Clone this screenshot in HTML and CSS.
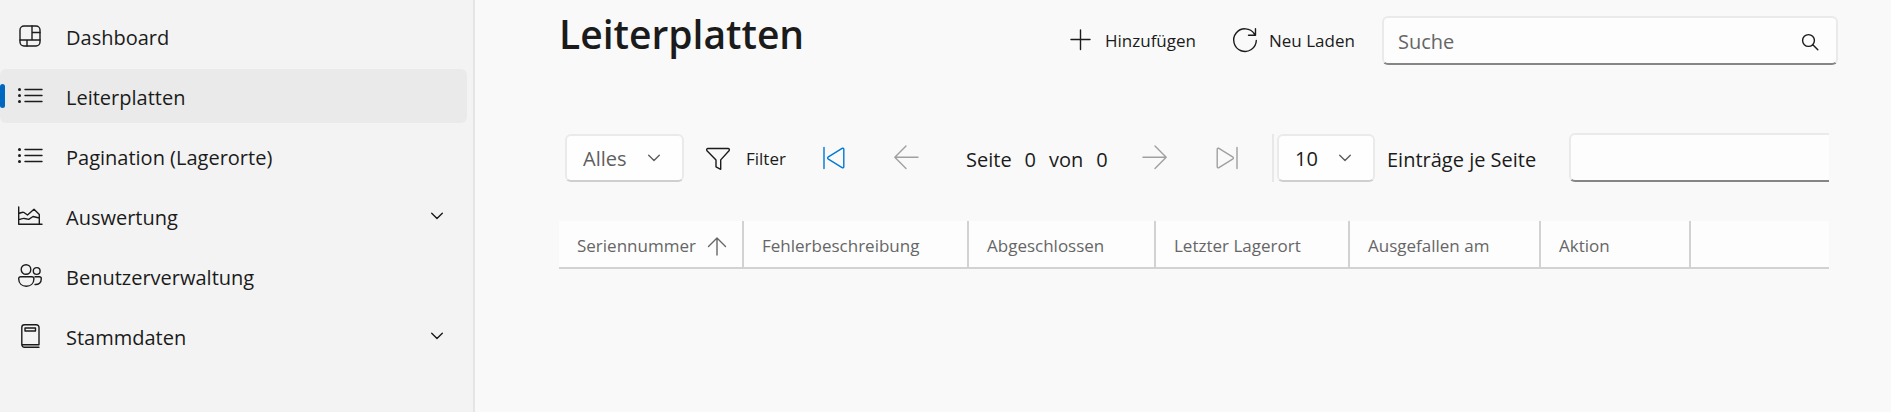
FILE: index.html
```html
<!DOCTYPE html>
<html lang="de">
<head>
<meta charset="utf-8">
<meta name="viewport" content="width=device-width, initial-scale=1">
<title>Leiterplatten</title>
<link rel="stylesheet" href="styles.css">
</head>
<body>
<div class="app">
  <nav class="sidebar" aria-label="Navigation">
    <a class="nav-item" href="#dashboard">
      <svg class="icon" viewBox="0 0 24 24"><rect x="2" y="2" width="20" height="20" rx="4"/><path d="M14 2v14M14 8.500h8M2 16h20M9 16v6"/></svg>
      <span>Dashboard</span>
    </a>
    <a class="nav-item nav-item-active" href="#leiterplatten" aria-current="page">
      <svg class="icon" viewBox="0 0 24 24"><path d="M7 5.500h17M7 11.500h17M7 17.500h17"/><g class="dots"><circle cx="1.500" cy="5.500" r="1.500"/><circle cx="1.500" cy="11.500" r="1.500"/><circle cx="1.500" cy="17.500" r="1.500"/></g></svg>
      <span>Leiterplatten</span>
    </a>
    <a class="nav-item" href="#lagerorte">
      <svg class="icon" viewBox="0 0 24 24"><path d="M7 5.500h17M7 11.500h17M7 17.500h17"/><g class="dots"><circle cx="1.500" cy="5.500" r="1.500"/><circle cx="1.500" cy="11.500" r="1.500"/><circle cx="1.500" cy="17.500" r="1.500"/></g></svg>
      <span>Pagination (Lagerorte)</span>
    </a>
    <a class="nav-item" href="#auswertung">
      <svg class="icon" viewBox="0 0 24 24"><path d="M.7 3v17.300H24M.7 9.500C3 9 4.500 7.500 6 8.500l3.500 2.500L16 5.200l5.300 5.300v9.800M.7 15.500c3-.5 4-1.500 6-1l4 .9 4.300-2.900 6.300 1.500"/></svg>
      <span>Auswertung</span>
      <svg class="chevron" viewBox="0 0 12 12"><path d="M.7 3.200L6 8.500l5.300-5.300"/></svg>
    </a>
    <a class="nav-item" href="#benutzer">
      <svg class="icon" viewBox="0 0 24 24"><circle cx="8" cy="5.500" r="4.800"/><circle cx="18.700" cy="7" r="3.400"/><path d="M2.700 12.700h11.200a2 2 0 0 1 2 2c0 5-3.500 7.500-7.600 7.500S.7 19.700.7 14.700a2 2 0 0 1 2-2zM17 12.700h4.300a2 2 0 0 1 2 2c0 4-2.500 6-6.300 5.800"/></svg>
      <span>Benutzerverwaltung</span>
    </a>
    <a class="nav-item" href="#stammdaten">
      <svg class="icon" viewBox="0 0 24 24"><path d="M21 23.300H6.500A2.700 2.700 0 0 1 3.800 20.600V3.500A2.700 2.700 0 0 1 6.500.8h11.800A2.700 2.700 0 0 1 21 3.500v17.300H4"/><rect x="7" y="4" width="10.500" height="3"/></svg>
      <span>Stammdaten</span>
      <svg class="chevron" viewBox="0 0 12 12"><path d="M.7 3.200L6 8.500l5.300-5.300"/></svg>
    </a>
  </nav>

  <main class="content">
    <header class="page-header">
      <h1 class="page-title">Leiterplatten</h1>
      <div class="page-actions">
        <button class="action" type="button">
          <svg class="icon" viewBox="0 0 24 24"><path d="M12.500 2v19.500M3 11.500h19"/></svg>
          <span>Hinzufügen</span>
        </button>
        <button class="action" type="button">
          <svg class="icon" viewBox="0 0 24 24"><path d="M22.500 6A11.300 11.300 0 1 0 24.300 12.500M23.500 .7v6.500h-7"/></svg>
          <span>Neu Laden</span>
        </button>
        <label class="search">
          <input class="search-input" type="text" placeholder="Suche" aria-label="Suche">
          <svg class="search-icon" viewBox="0 0 16 16"><circle cx="6.500" cy="6.500" r="5.900"/><path d="M10.800 10.800l5 5"/></svg>
        </label>
      </div>
    </header>

    <section class="panel">
      <div class="toolbar">
        <div class="select-box select-muted">
          <select class="select" aria-label="Anzeige"><option>Alles</option></select>
          <svg class="chevron" viewBox="0 0 12 12"><path d="M.7 3.200L6 8.500l5.300-5.300"/></svg>
        </div>
        <button class="action filter" type="button">
          <svg class="icon" viewBox="0 0 24 24"><path d="M2 2.500h20c1.300 0 1.800 1.200 1 2.200l-8.300 9.200v9.400L10 20.800v-6.900L1 4.700C.2 3.700.8 2.500 2 2.500z"/></svg>
          <span>Filter</span>
        </button>
        <button class="pager pager-first" type="button" aria-label="Erste Seite"><svg class="icon" viewBox="0 0 24 24"><path d="M2 1.500v21M21.800 3v18a1 1 0 0 1-1.300.8L6 12.800a1 1 0 0 1 0-1.600L20.500 2.200a1 1 0 0 1 1.300.8z"/></svg></button>
        <button class="pager" type="button" aria-label="Vorherige Seite" disabled><svg class="icon" viewBox="0 0 24 24"><path d="M24 11.300H.8M12 0L.8 11.300 12 22.500"/></svg></button>
        <p class="page-info"><span>Seite</span><span>0</span><span>von</span><span>0</span></p>
        <button class="pager" type="button" aria-label="Nächste Seite" disabled><svg class="icon" viewBox="0 0 24 24"><path d="M0 11.300h23.200M12 0l11.200 11.300L12 22.500"/></svg></button>
        <button class="pager" type="button" aria-label="Letzte Seite" disabled><svg class="icon" viewBox="0 0 24 24"><path d="M22 1.500v21M2.200 3v18a1 1 0 0 0 1.300.8L18 12.800a1 1 0 0 0 0-1.600L3.500 2.200a1 1 0 0 0-1.300.8z"/></svg></button>
        <div class="page-size">
          <div class="select-box">
            <select class="select" id="page-size"><option>10</option></select>
            <svg class="chevron" viewBox="0 0 12 12"><path d="M.7 3.200L6 8.500l5.300-5.300"/></svg>
          </div>
          <label class="page-size-label" for="page-size">Einträge je Seite</label>
        </div>
        <div class="quick-clip"><input class="quick-input" type="text" aria-label="Schnellsuche"></div>
      </div>

      <table class="grid">
        <colgroup><col class="col-serial"><col class="col-error"><col class="col-done"><col class="col-place"><col class="col-failed"><col class="col-action"><col></colgroup>
        <thead>
          <tr>
            <th scope="col" aria-sort="ascending"><span class="sorted">Seriennummer<svg class="sort-icon" viewBox="0 0 18 18"><path d="M9 18V1M.5 9.500L9 1l8.500 8.500"/></svg></span></th>
            <th scope="col">Fehlerbeschreibung</th>
            <th scope="col">Abgeschlossen</th>
            <th scope="col">Letzter Lagerort</th>
            <th scope="col">Ausgefallen am</th>
            <th scope="col">Aktion</th>
            <td></td>
          </tr>
        </thead>
      </table>
    </section>
  </main>
</div>
</body>
</html>
```
FILE: styles.css
```css
* { box-sizing: border-box; }

body {
  margin: 0;
  background: #f9f9f9;
  color: #1b1b1b;
  font-family: "Open Sans", "Noto Sans", sans-serif;
  font-size: 20px;
  line-height: 28px;
}

button, input, select { font: inherit; color: inherit; }

svg {
  display: block;
  flex: none;
  fill: none;
  stroke: currentColor;
  stroke-width: 1.4;
  stroke-linecap: round;
  stroke-linejoin: round;
  overflow: visible;
}

.icon { width: 24px; height: 24px; }
.chevron { width: 12px; height: 12px; }
.dots { fill: currentColor; stroke: none; }

.app { display: flex; min-height: 100vh; }

/* Sidebar */
.sidebar {
  flex: none;
  width: 475px;
  padding: 9px 6px 9px 0;
  display: flex;
  flex-direction: column;
  gap: 6px;
  background: #f3f3f3;
  border-right: 2px solid #e5e5e5;
}

.nav-item {
  height: 54px;
  padding: 0 24px 0 18px;
  display: flex;
  align-items: center;
  gap: 24px;
  border-radius: 6px;
  color: inherit;
  text-decoration: none;
}

.nav-item span { padding-top: 3px; }

.nav-item .chevron { margin-left: auto; }

.nav-item-active {
  position: relative;
  background: #eaeaea;
}

.nav-item-active::before {
  content: "";
  position: absolute;
  left: 0;
  top: 15px;
  width: 5px;
  height: 24px;
  border-radius: 3px;
  background: #0067c0;
}

/* Page header */
.content {
  flex: 1;
  min-width: 0;
  padding: 6px 53px 24px 84px;
}

.page-header {
  display: flex;
  align-items: flex-start;
  justify-content: space-between;
}

.page-title {
  margin: 0;
  font-size: 39px;
  line-height: 56px;
  font-weight: 600;
}

.page-actions {
  flex: 0 1 784px;
  display: flex;
  padding-top: 10px;
}

.action {
  flex: none;
  height: 48px;
  padding: 0 12px;
  display: flex;
  align-items: center;
  gap: 13px;
  border: 0;
  background: none;
  font-size: 17px;
}

.action span { padding-top: 2px; }

.page-actions .action { width: 164px; padding-left: 14px; }

.search {
  position: relative;
  flex: 1;
  min-width: 0;
}

.search-input, .quick-input {
  display: block;
  width: 100%;
  height: 49px;
  padding: 2px 48px 0 14px;
  border: 2px solid #eaeaea;
  border-bottom-color: #868686;
  border-radius: 6px;
  background: #fdfdfd;
}

.search-input::placeholder { color: #666; opacity: 1; }

.search-icon {
  position: absolute;
  right: 20px;
  top: 18px;
  width: 16px;
  height: 16px;
}

/* Toolbar */
.panel { padding-right: 9px; }

.toolbar {
  display: flex;
  align-items: flex-end;
  padding: 68px 0 39px 6px;
}

.select-box {
  position: relative;
  flex: none;
  width: 98px;
}

.select-muted { width: 119px; color: #5f5f5f; }

.select {
  display: block;
  width: 100%;
  height: 48px;
  padding: 2px 40px 0 16px;
  appearance: none;
  border: 2px solid #eaeaea;
  border-bottom-color: #cfcfcf;
  border-radius: 6px;
  background: #fefefe;
}

.select-box .chevron {
  position: absolute;
  right: 24px;
  top: 18px;
  color: #5f5f5f;
  pointer-events: none;
}

.filter { width: 108px; margin-left: 10px; gap: 16px; }

.pager {
  flex: none;
  width: 60px;
  height: 48px;
  padding: 0;
  display: grid;
  place-items: center;
  border: 0;
  background: none;
  color: #a0a0a0;
}

.pager + .pager { margin-left: 12px; }
.pager-first { margin-left: 2px; color: #0078d4; }

.page-info {
  flex: none;
  width: 189px;
  height: 48px;
  margin: 0;
  padding: 3px 0 0 30px;
  display: flex;
  align-items: center;
  gap: 13px;
}

.page-size {
  flex: none;
  width: 264px;
  margin-left: 15px;
  padding-left: 3px;
  display: flex;
  align-items: center;
  gap: 12px;
  border-left: 2px solid #e8e8e8;
}

.page-size-label {
  padding-top: 3px;
  white-space: nowrap;
}

.quick-clip {
  flex: 1;
  min-width: 0;
  margin-left: 33px;
  overflow: hidden;
}

.quick-input { width: calc(100% + 24px); }

/* Table */
.grid {
  width: 100%;
  table-layout: fixed;
  border-collapse: separate;
  border-spacing: 0;
  background: #fdfdfd;
  font-size: 17px;
  line-height: 24px;
  color: #666;
}

.col-serial { width: 185px; }
.col-error { width: 225px; }
.col-done { width: 187px; }
.col-place { width: 194px; }
.col-failed { width: 191px; }
.col-action { width: 150px; }

.grid th, .grid td {
  height: 48px;
  padding: 3px 16px 0 18px;
  border-bottom: 2px solid #d2d2d2;
  text-align: left;
  font-weight: 400;
  white-space: nowrap;
}

.grid th { border-right: 2px solid #d2d2d2; }

.sorted {
  display: flex;
  align-items: center;
  justify-content: space-between;
}

.sort-icon { width: 18px; height: 18px; }
```
